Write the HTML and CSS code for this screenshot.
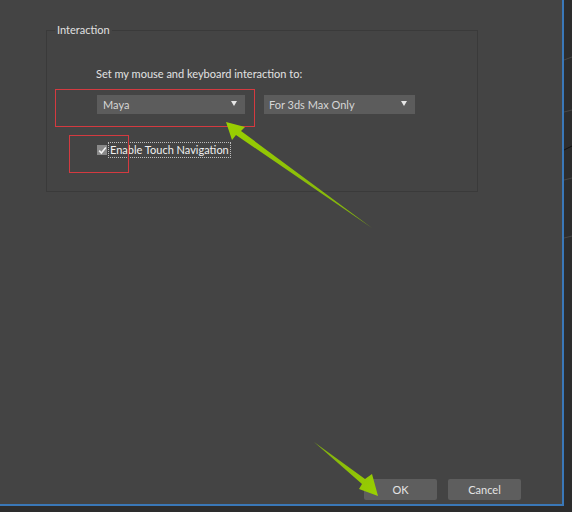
FILE: index.html
```html
<!DOCTYPE html>
<html>
<head>
<meta charset="utf-8">
<link rel="stylesheet" href="styles.css">
</head>
<body>
<div class="dialog">
  <fieldset class="group">
    <legend class="group-title">Interaction</legend>
    <div class="prompt">Set my mouse and keyboard interaction to:</div>
    <div class="combo-row">
      <div class="combo combo-main"><span class="combo-text">Maya</span><span class="combo-arrow"></span></div>
      <div class="combo combo-scope"><span class="combo-text">For 3ds Max Only</span><span class="combo-arrow"></span></div>
    </div>
    <div class="check-row">
      <span class="checkbox">
        <svg width="9" height="9" viewBox="0 0 9 9"><path d="M1.2 4.6 L3.4 7 L7.8 1.6" fill="none" stroke="#f2f2f2" stroke-width="1.6"/></svg>
      </span>
      <span class="check-label">Enable Touch Navigation</span>
    </div>
  </fieldset>
  <div class="buttons">
    <div class="btn">OK</div>
    <div class="btn">Cancel</div>
  </div>
</div>
<div class="mark mark-combo"></div>
<div class="mark mark-check"></div>
<svg class="overlay" width="572" height="512" viewBox="0 0 572 512">
  <defs>
    <linearGradient id="g1" x1="226" y1="122" x2="372" y2="228" gradientUnits="userSpaceOnUse">
      <stop offset="0" stop-color="#9ad000"/>
      <stop offset="1" stop-color="#7fae10"/>
    </linearGradient>
    <linearGradient id="g2" x1="314" y1="442" x2="378" y2="495" gradientUnits="userSpaceOnUse">
      <stop offset="0" stop-color="#7fae10"/>
      <stop offset="1" stop-color="#9ad000"/>
    </linearGradient>
  </defs>
  <g stroke="#5a5a5a" stroke-width="1" opacity="0.6">
    <line x1="564" y1="60" x2="572" y2="57"/>
    <line x1="564" y1="112" x2="572" y2="110"/>
    <line x1="564" y1="180" x2="572" y2="178"/>
    <line x1="564" y1="238" x2="572" y2="236"/>
  </g>
  <line x1="564" y1="150" x2="572" y2="146" stroke="#111" stroke-width="1"/>
  <polygon points="226,122 245,127 241,131 372,228 236,135 232,140" fill="url(#g1)"/>
  <polygon points="314,442 365,479 372,474 378,496 359,489 362,484" fill="url(#g2)"/>
</svg>
</body>
</html>
```
FILE: styles.css
```css
html, body {
  margin: 0;
  padding: 0;
}
body {
  width: 572px;
  height: 512px;
  background: #2d2d2d;
  position: relative;
  overflow: hidden;
  font-family: Lato, "Noto Sans", sans-serif;
  font-size: 11px;
  color: #dcdcdc;
}
.dialog {
  width: 562px;
  height: 482px;
  padding-top: 22px;
  background: #444444;
  border-right: 2px solid #3a78b8;
  border-bottom: 2px solid #3a78b8;
  display: flex;
  flex-direction: column;
}
.group {
  margin: 0 0 0 46px;
  box-sizing: border-box;
  width: 432px;
  padding: 28px 0 33px 49px;
  border: 1px solid #3a3a3a;
  min-width: 0;
}
.group-title {
  margin-left: -41px;
  padding: 0 2px;
  line-height: 16px;
  color: #e0e0e0;
}
.prompt {
  line-height: 16px;
  color: #e2e2e2;
}
.combo-row {
  display: flex;
  gap: 19px;
  margin-top: 13px;
  margin-left: 1px;
}
.combo {
  height: 19px;
  background: #5c5c5c;
  display: flex;
  align-items: center;
  justify-content: space-between;
  padding: 0 8px 0 6px;
  box-sizing: border-box;
  color: #d6d6d6;
}
.combo-main { width: 148px; }
.combo-scope { width: 151px; padding-left: 5px; }
.combo-arrow {
  width: 0;
  height: 0;
  border-left: 3px solid transparent;
  border-right: 3px solid transparent;
  border-top: 5px solid #e6e6e6;
  margin-top: -3px;
}
.check-row {
  display: flex;
  align-items: center;
  margin-top: 28px;
  margin-left: 1px;
  height: 16px;
}
.checkbox {
  width: 10px;
  height: 10px;
  background: #8a8a8a;
  display: flex;
  align-items: center;
  justify-content: center;
}
.check-label {
  margin-left: 1px;
  padding: 0 1px;
  border: 1px dotted #bdbdbd;
  line-height: 14px;
  color: #f0f0f0;
}
.buttons {
  margin-top: auto;
  margin-bottom: 4px;
  display: flex;
  justify-content: flex-end;
  gap: 11px;
  padding-right: 41px;
}
.btn {
  width: 73px;
  height: 21px;
  border-radius: 2px;
  background: #5e5e5e;
  display: flex;
  align-items: center;
  justify-content: center;
  color: #e4e4e4;
}
.mark {
  position: absolute;
  border: 1px solid #d43a40;
}
.mark-combo {
  left: 55px;
  top: 89px;
  width: 198px;
  height: 36px;
}
.mark-check {
  left: 69px;
  top: 135px;
  width: 58px;
  height: 36px;
}
.overlay {
  position: absolute;
  left: 0;
  top: 0;
}
```
